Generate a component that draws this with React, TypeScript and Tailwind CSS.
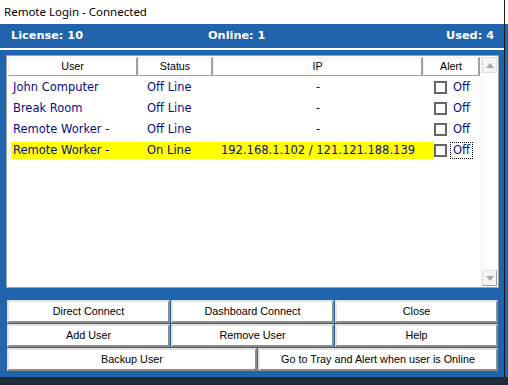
import React from "react";

const ROWS = [
  { user: "John Computer", status: "Off Line", ip: "-", hl: false },
  { user: "Break Room", status: "Off Line", ip: "-", hl: false },
  { user: "Remote Worker -", status: "Off Line", ip: "-", hl: false },
  { user: "Remote Worker -", status: "On Line", ip: "192.168.1.102 / 121.121.188.139", hl: true },
];

const sans = { fontFamily: '"Liberation Sans", Arial, sans-serif' };
const tahoma = { fontFamily: '"DejaVu Sans", Verdana, sans-serif' };

function HeaderCell({ w, label }: { w: string; label: string }) {
  return (
    <div
      className={`${w} h-full flex items-center justify-center bg-white border-t border-l border-t-[#f0f0f0] border-l-[#f0f0f0] border-b border-b-[#a0a0a0] border-r-2 border-r-[#a0a0a0] text-[10.7px] text-black`}
      style={sans}
    >
      {label}
    </div>
  );
}

function Btn({ label }: { label: string }) {
  return (
    <button
      className="h-[23px] bg-white border-2 border-t-[#e3e3e3] border-l-[#e3e3e3] border-b-[#8c8c8c] border-r-[#8c8c8c] text-[10.8px] text-black flex items-center justify-center"
      style={sans}
    >
      {label}
    </button>
  );
}

function Arrow({ up }: { up: boolean }) {
  return (
    <div className={`h-[16px] flex items-center justify-center bg-[#f4f4f4] border border-[#e0e0e0] ${up ? "" : "border-b-[#9a9a9a] border-r-[#9a9a9a]"}`}>
      <svg width="8" height="5" viewBox="0 0 8 5">
        {up ? <polygon points="4,0 8,5 0,5" fill="#a8a8a8" /> : <polygon points="0,0 8,0 4,5" fill="#a8a8a8" />}
      </svg>
    </div>
  );
}

export default function App() {
  return (
    <div className="w-[508px] h-[385px] flex flex-col bg-[#1d2b3a] overflow-hidden">
      <div className="flex h-[377px]">
        <div className="w-[504px] flex flex-col">
          {/* title */}
          <div className="h-[24px] bg-white flex items-center pl-[4px] text-[11.5px] text-black" style={{ fontFamily: '"Noto Sans", "Open Sans", sans-serif' }}>
            Remote Login - Connected
          </div>
          <div className="flex-1 bg-[#2164ae] flex flex-col">
            {/* license strip */}
            <div className="h-[24px] flex items-center pl-[11px] pr-[10px] text-white font-bold text-[11.3px]" style={tahoma}>
              <span className="w-[197px]">License: 10</span>
              <span>Online: 1</span>
              <span className="flex-1 text-right">Used: 4</span>
            </div>
            <div className="h-[2px] bg-white" />

            {/* list panel */}
            <div className="mt-[5px] ml-[6px] w-[493px] h-[233px] border border-[#a0a0a0] bg-white p-px flex">
              <div className="w-[472px] flex flex-col">
                <div className="h-[19px] flex">
                  <HeaderCell w="w-[130px]" label="User" />
                  <HeaderCell w="w-[75px]" label="Status" />
                  <HeaderCell w="w-[210px]" label="IP" />
                  <HeaderCell w="w-[57px]" label="Alert" />
                </div>
                <div className="h-px" />
                {ROWS.map((r, i) => (
                  <div key={i} className="h-[21px] flex py-[2px] text-[11.5px] text-[#0c0c88]" style={tahoma}>
                    <div className="w-[130px] pl-[3px] flex">
                      <div className={`flex-1 flex items-center pl-[2px] ${r.hl ? "bg-[#ffff00]" : ""}`}>{r.user}</div>
                    </div>
                    <div className={`w-[75px] flex items-center pl-[9px] ${r.hl ? "bg-[#ffff00]" : ""}`}>{r.status}</div>
                    <div className={`w-[210px] flex items-center justify-center ${r.hl ? "bg-[#ffff00]" : ""}`}>{r.ip}</div>
                    <div className="w-[57px] flex items-center">
                      <div className={`w-[11px] h-full ${r.hl ? "bg-[#ffff00]" : ""}`} />
                      <div className="w-[13px] h-[13px] border-2 border-[#666666] bg-white" />
                      <span className={`ml-[3px] px-[2px] leading-[15px] ${r.hl ? "border border-dotted border-black" : "border border-transparent"}`}>Off</span>
                    </div>
                  </div>
                ))}
              </div>
              {/* scrollbar */}
              <div className="w-[17px] ml-px flex flex-col justify-between bg-white border-l border-[#f0f0f0]">
                <Arrow up />
                <Arrow up={false} />
              </div>
            </div>

            {/* buttons */}
            <div className="mt-[12px] ml-[7px] w-[491px] flex flex-col gap-px">
              <div className="grid grid-cols-3 gap-px">
                <Btn label="Direct Connect" />
                <Btn label="Dashboard Connect" />
                <Btn label="Close" />
              </div>
              <div className="grid grid-cols-3 gap-px">
                <Btn label="Add User" />
                <Btn label="Remove User" />
                <Btn label="Help" />
              </div>
              <div className="grid grid-cols-[250px_1fr] gap-px">
                <Btn label="Backup User" />
                <Btn label="Go to Tray and Alert when user is Online" />
              </div>
            </div>
          </div>
        </div>
        <div className="w-px bg-[#1b1b1b]" />
        <div className="w-[3px] flex flex-col">
          <div className="h-[24px] bg-white" />
          <div className="flex-1 bg-[#2164ae]" />
        </div>
      </div>
    </div>
  );
}
